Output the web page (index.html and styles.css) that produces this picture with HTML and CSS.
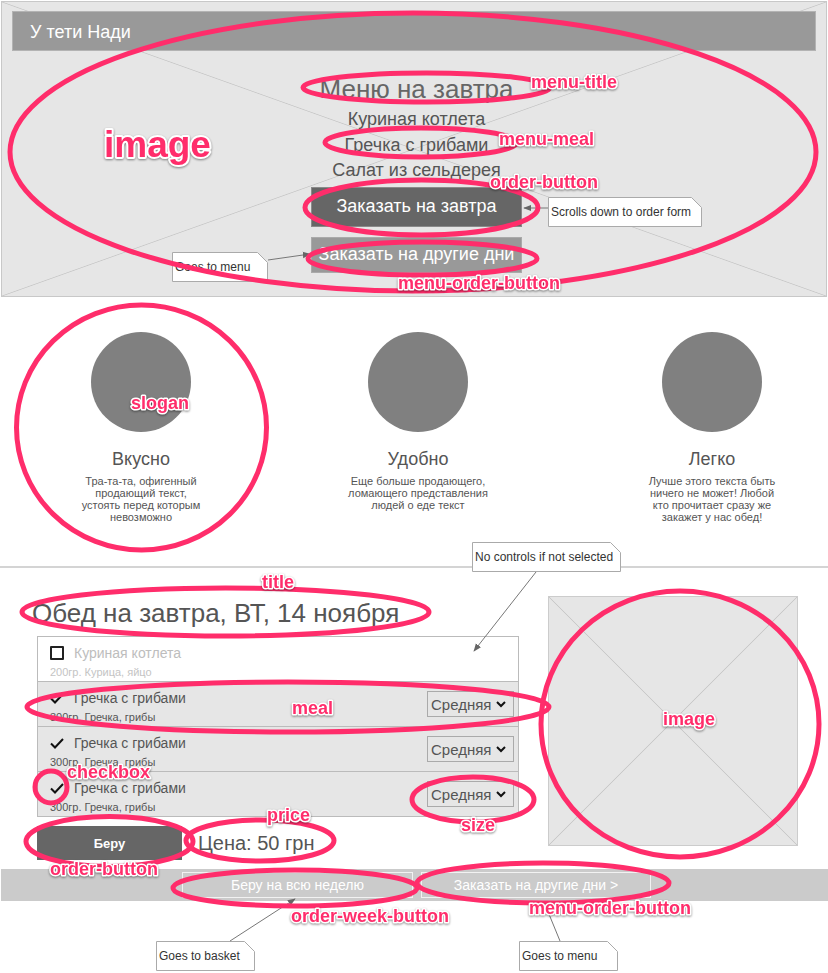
FILE: index.html
```html
<!DOCTYPE html>
<html lang="ru">
<head>
<meta charset="utf-8">
<title>У тети Нади</title>
<link rel="stylesheet" href="styles.css">
</head>
<body>
<div class="page">
  <section class="hero">
    <header class="site-header">У тети Нади</header>
    <div class="menu">
      <h1 class="menu-title">Меню на завтра</h1>
      <ul class="menu-meals">
        <li>Куриная котлета</li>
        <li>Гречка с грибами</li>
        <li>Салат из сельдерея</li>
      </ul>
      <button class="btn btn-order">Заказать на завтра</button>
      <button class="btn btn-other">Заказать на другие дни</button>
    </div>
  </section>

  <section class="slogans">
    <div class="slogan">
      <div class="slogan-pic"></div>
      <h2 class="slogan-title">Вкусно</h2>
      <p class="slogan-text">Тра-та-та, офигенный<br>продающий текст,<br>устоять перед которым<br>невозможно</p>
    </div>
    <div class="slogan">
      <div class="slogan-pic"></div>
      <h2 class="slogan-title">Удобно</h2>
      <p class="slogan-text">Еще больше продающего,<br>ломающего представления<br>людей о еде текст</p>
    </div>
    <div class="slogan slogan-last">
      <div class="slogan-pic"></div>
      <h2 class="slogan-title">Легко</h2>
      <p class="slogan-text">Лучше этого текста быть<br>ничего не может! Любой<br>кто прочитает сразу же<br>закажет у нас обед!</p>
    </div>
  </section>

  <hr class="divider">

  <section class="order">
    <div class="order-main">
      <h2 class="order-title">Обед на завтра, ВТ, 14 ноября</h2>
      <div class="meals">
        <div class="meal meal-off">
          <div class="meal-info">
            <div class="meal-name"><span class="meal-icon"><span class="checkbox"></span></span>Куриная котлета</div>
            <div class="meal-desc">200гр. Курица, яйцо</div>
          </div>
        </div>
        <div class="meal">
          <div class="meal-info">
            <div class="meal-name"><span class="meal-icon"><svg class="check" width="14" height="11" viewBox="0 0 14 11"><path d="M1 5.5 L5 9.5 L13 1" fill="none" stroke="#111" stroke-width="2"/></svg></span>Гречка с грибами</div>
            <div class="meal-desc">300гр. Гречка, грибы</div>
          </div>
          <div class="size">Средняя<svg class="chev" width="10" height="7" viewBox="0 0 10 7"><path d="M1 1 L5 5 L9 1" fill="none" stroke="#111" stroke-width="2"/></svg></div>
        </div>
        <div class="meal">
          <div class="meal-info">
            <div class="meal-name"><span class="meal-icon"><svg class="check" width="14" height="11" viewBox="0 0 14 11"><path d="M1 5.5 L5 9.5 L13 1" fill="none" stroke="#111" stroke-width="2"/></svg></span>Гречка с грибами</div>
            <div class="meal-desc">300гр. Гречка, грибы</div>
          </div>
          <div class="size">Средняя<svg class="chev" width="10" height="7" viewBox="0 0 10 7"><path d="M1 1 L5 5 L9 1" fill="none" stroke="#111" stroke-width="2"/></svg></div>
        </div>
        <div class="meal">
          <div class="meal-info">
            <div class="meal-name"><span class="meal-icon"><svg class="check" width="14" height="11" viewBox="0 0 14 11"><path d="M1 5.5 L5 9.5 L13 1" fill="none" stroke="#111" stroke-width="2"/></svg></span>Гречка с грибами</div>
            <div class="meal-desc">300гр. Гречка, грибы</div>
          </div>
          <div class="size">Средняя<svg class="chev" width="10" height="7" viewBox="0 0 10 7"><path d="M1 1 L5 5 L9 1" fill="none" stroke="#111" stroke-width="2"/></svg></div>
        </div>
      </div>
      <div class="buy-row">
        <button class="btn-buy">Беру</button>
        <div class="price">Цена: 50 грн</div>
      </div>
    </div>
    <div class="order-image"></div>
  </section>

  <div class="bottom-bar">
    <button class="bar-btn bar-btn-week">Беру на всю неделю</button>
    <button class="bar-btn bar-btn-other">Заказать на другие дни &gt;</button>
  </div>

  <svg class="callouts" width="828" height="973" viewBox="0 0 828 973">
    <defs>
      <marker id="ah" viewBox="0 0 10 10" refX="9" refY="5" markerWidth="8" markerHeight="8" orient="auto">
        <path d="M0 1 L10 5 L0 9 Z" fill="#666"/>
      </marker>
    </defs>
    <g class="note-shapes">
      <polygon points="548.5,197.5 691.5,197.5 701.5,207.5 701.5,226.5 548.5,226.5"/>
      <polygon points="172.5,252.5 257.5,252.5 267.5,262.5 267.5,281.5 172.5,281.5"/>
      <polygon points="472.5,542.5 610.5,542.5 620.5,552.5 620.5,571.5 472.5,571.5"/>
      <polygon points="156.5,941.5 244.5,941.5 254.5,951.5 254.5,970.5 156.5,970.5"/>
      <polygon points="519.5,941.5 607.5,941.5 617.5,951.5 617.5,970.5 519.5,970.5"/>
    </g>
    <g class="arrows">
      <line x1="548" y1="208" x2="524" y2="208" marker-end="url(#ah)"/>
      <line x1="268" y1="260" x2="310" y2="254" marker-end="url(#ah)"/>
      <line x1="536" y1="572" x2="474" y2="651" marker-end="url(#ah)"/>
      <line x1="230" y1="941" x2="295" y2="899" marker-end="url(#ah)"/>
      <line x1="560" y1="941" x2="544" y2="902" marker-end="url(#ah)"/>
    </g>
  </svg>
  <div class="note note-scroll">Scrolls down to order form</div>
  <div class="note note-menu-top">Goes to menu</div>
  <div class="note note-controls">No controls if not selected</div>
  <div class="note note-basket">Goes to basket</div>
  <div class="note note-menu-bottom">Goes to menu</div>

  <svg class="annotations" width="828" height="973" viewBox="0 0 828 973">
    <g class="rings">
      <ellipse cx="413" cy="152" rx="403" ry="139" stroke-width="6"/>
      <ellipse cx="426.5" cy="87.5" rx="123.5" ry="14.5"/>
      <ellipse cx="421" cy="142.5" rx="96" ry="14.5"/>
      <ellipse cx="421.5" cy="207.5" rx="116.5" ry="27.5"/>
      <ellipse cx="422.5" cy="258.5" rx="114.5" ry="16.5"/>
      <ellipse cx="141.5" cy="427.5" rx="125" ry="122.5" stroke-width="6"/>
      <ellipse cx="225.5" cy="612" rx="203.5" ry="24"/>
      <ellipse cx="288" cy="707" rx="261" ry="25"/>
      <ellipse cx="680" cy="724" rx="139" ry="133" stroke-width="6"/>
      <ellipse cx="51" cy="787" rx="16" ry="16"/>
      <ellipse cx="473" cy="799.5" rx="61" ry="22.5"/>
      <ellipse cx="260" cy="840.5" rx="74" ry="20.5"/>
      <ellipse cx="109.5" cy="841.5" rx="83.5" ry="25"/>
      <ellipse cx="295" cy="888" rx="122" ry="18"/>
      <ellipse cx="543" cy="883" rx="126" ry="20"/>
    </g>
    <g class="labels">
      <text class="label-big" x="104" y="157">image</text>
      <text x="531" y="88">menu-title</text>
      <text x="499" y="144.5">menu-meal</text>
      <text x="490" y="188">order-button</text>
      <text x="398" y="289">menu-order-button</text>
      <text x="131" y="409">slogan</text>
      <text x="262" y="588">title</text>
      <text x="292" y="714">meal</text>
      <text x="663" y="725">image</text>
      <text x="67" y="778">checkbox</text>
      <text x="267" y="821">price</text>
      <text x="461" y="831">size</text>
      <text x="50" y="875">order-button</text>
      <text x="291" y="922">order-week-button</text>
      <text x="529" y="914">menu-order-button</text>
    </g>
  </svg>
</div>
</body>
</html>
```

FILE: styles.css
```css
* {
  box-sizing: border-box;
}

html,
body {
  margin: 0;
  padding: 0;
  background: #fff;
}

body {
  font-family: "Liberation Sans", Arial, sans-serif;
  color: #555;
}

.page {
  position: relative;
  width: 828px;
  height: 973px;
  overflow: hidden;
}

/* ---------- hero ---------- */
.hero {
  margin: 1px 1px 0 1px;
  height: 296px;
  border: 1px solid #c8c8c8;
  padding: 9px 10px 0 10px;
  background:
    linear-gradient(to top right, transparent calc(50% - 0.8px), #c9c9c9 50%, transparent calc(50% + 0.8px)),
    linear-gradient(to bottom right, transparent calc(50% - 0.8px), #c9c9c9 50%, transparent calc(50% + 0.8px)),
    #e6e6e6;
}

.site-header {
  height: 40px;
  background: #999;
  border: 1px solid #b3b3b3;
  color: #fff;
  font-size: 18px;
  line-height: 40px;
  padding-left: 17px;
}

.menu {
  display: flex;
  flex-direction: column;
  align-items: center;
  padding-left: 5px;
}

.menu-title {
  margin: 23px 0 0;
  font-size: 26px;
  font-weight: normal;
  line-height: 30px;
  color: #666;
}

.menu-meals {
  list-style: none;
  margin: 3px 0 0;
  padding: 0;
  text-align: center;
  font-size: 18px;
  line-height: 25.5px;
  color: #555;
}

.btn {
  font: inherit;
  font-size: 18px;
  color: #fff;
  width: 211px;
  padding: 0;
}

.btn-order {
  margin-top: 3px;
  height: 40px;
  background: #666;
  border: 1px solid #8a8a8a;
}

.btn-other {
  margin-top: 10px;
  height: 36px;
  background: #999;
  border: 1px solid #aaa;
}

/* ---------- slogans ---------- */
.slogans {
  display: flex;
  gap: 77px;
  height: 269px;
  padding: 35px 0 0 41px;
}

.slogan {
  width: 200px;
  display: flex;
  flex-direction: column;
  align-items: center;
}

.slogan-last {
  margin-left: 17px;
}

.slogan-pic {
  width: 100px;
  height: 100px;
  border-radius: 50%;
  background: #808080;
}

.slogan-title {
  margin: 16px 0 0;
  font-size: 18px;
  line-height: 22px;
  font-weight: normal;
  color: #555;
}

.slogan-text {
  margin: 5px 0 0;
  font-size: 11px;
  line-height: 12px;
  text-align: center;
  white-space: nowrap;
  color: #555;
}

.divider {
  margin: 0;
  border: 0;
  height: 2px;
  background: #d4d4d4;
}

/* ---------- order ---------- */
.order {
  display: flex;
  gap: 29px;
  padding: 28px 0 0 37px;
}

.order-main {
  width: 482px;
  flex-shrink: 0;
}

.order-title {
  margin: 0 0 0 -5px;
  font-size: 26px;
  line-height: 34px;
  font-weight: normal;
  color: #555;
  white-space: nowrap;
}

.meals {
  margin-top: 6px;
  border: 1px solid #bbb;
}

.meal {
  display: flex;
  justify-content: space-between;
  align-items: center;
  height: 44px;
  padding: 0 4px 0 12px;
  background: #e6e6e6;
}

.meal + .meal {
  height: 45px;
  border-top: 1px solid #bbb;
}

.meal-off {
  background: #fff;
}

.meal-info {
  align-self: flex-start;
  padding-top: 7px;
}

.meal-name {
  display: flex;
  align-items: center;
  height: 18px;
  font-size: 14px;
  color: #555;
}

.meal-off .meal-name {
  color: #bdbdbd;
}

.meal-icon {
  width: 14px;
  margin-right: 10px;
  display: flex;
  align-items: center;
}

.checkbox {
  width: 14px;
  height: 14px;
  border: 2px solid #222;
  border-radius: 1px;
}

.check {
  display: block;
}

.meal-desc {
  margin-top: 4px;
  font-size: 11px;
  line-height: 13px;
  color: #555;
}

.meal-off .meal-desc {
  color: #c4c4c4;
}

.size {
  width: 87px;
  height: 26px;
  border: 1px solid #aaa;
  display: flex;
  align-items: center;
  justify-content: space-between;
  padding: 0 7px 0 3px;
  font-size: 15px;
  color: #555;
}

.chev {
  display: block;
}

.buy-row {
  display: flex;
  align-items: center;
  gap: 16px;
  margin-top: 9px;
}

.btn-buy {
  width: 145px;
  height: 34px;
  padding: 0;
  border: 0;
  background: #666;
  color: #fff;
  font-family: "Liberation Sans", Arial, sans-serif;
  font-weight: bold;
  font-size: 13px;
}

.price {
  font-size: 20px;
  color: #555;
}

.order-image {
  width: 250px;
  height: 250px;
  flex-shrink: 0;
  border: 1px solid #ccc;
  background:
    linear-gradient(to top right, transparent calc(50% - 0.8px), #c9c9c9 50%, transparent calc(50% + 0.8px)),
    linear-gradient(to bottom right, transparent calc(50% - 0.8px), #c9c9c9 50%, transparent calc(50% + 0.8px)),
    #e6e6e6;
}

/* ---------- bottom bar ---------- */
.bottom-bar {
  margin: 9px 0 0 1px;
  height: 32px;
  background: #cbcbcb;
  display: flex;
  align-items: center;
  gap: 8px;
  padding-left: 181px;
}

.bar-btn {
  height: 26px;
  padding: 0;
  background: transparent;
  border: 1px solid #f2f2f2;
  color: #fff;
  font-family: "Liberation Sans", Arial, sans-serif;
  font-size: 14px;
}

.bar-btn-week {
  width: 231px;
}

.bar-btn-other {
  width: 230px;
}

/* ---------- callouts (wireframe notes) ---------- */
.callouts,
.annotations {
  position: absolute;
  left: 0;
  top: 0;
  pointer-events: none;
}

.note-shapes polygon {
  fill: #fff;
  stroke: #aaa;
  stroke-width: 1;
}

.arrows line {
  stroke: #777;
  stroke-width: 1;
}

.note {
  position: absolute;
  height: 30px;
  line-height: 30px;
  padding-left: 3px;
  font-size: 12px;
  color: #333;
  white-space: nowrap;
}

.note-scroll {
  left: 548px;
  top: 197px;
  width: 154px;
}

.note-menu-top {
  left: 172px;
  top: 252px;
  width: 96px;
}

.note-controls {
  left: 472px;
  top: 542px;
  width: 149px;
}

.note-basket {
  left: 156px;
  top: 941px;
  width: 99px;
}

.note-menu-bottom {
  left: 519px;
  top: 941px;
  width: 99px;
}

/* ---------- review annotations ---------- */
.rings ellipse {
  fill: none;
  stroke: #ff2d6b;
  stroke-width: 5;
}

.labels text {
  font-family: "Liberation Sans", Arial, sans-serif;
  font-weight: bold;
  font-size: 18px;
  fill: #ff2d6b;
  stroke: #fff;
  stroke-width: 3px;
  stroke-linejoin: round;
  paint-order: stroke;
  filter: drop-shadow(0 1px 1.2px rgba(0, 0, 0, 0.45));
}

.labels .label-big {
  font-size: 37px;
  stroke-width: 4px;
}
```
